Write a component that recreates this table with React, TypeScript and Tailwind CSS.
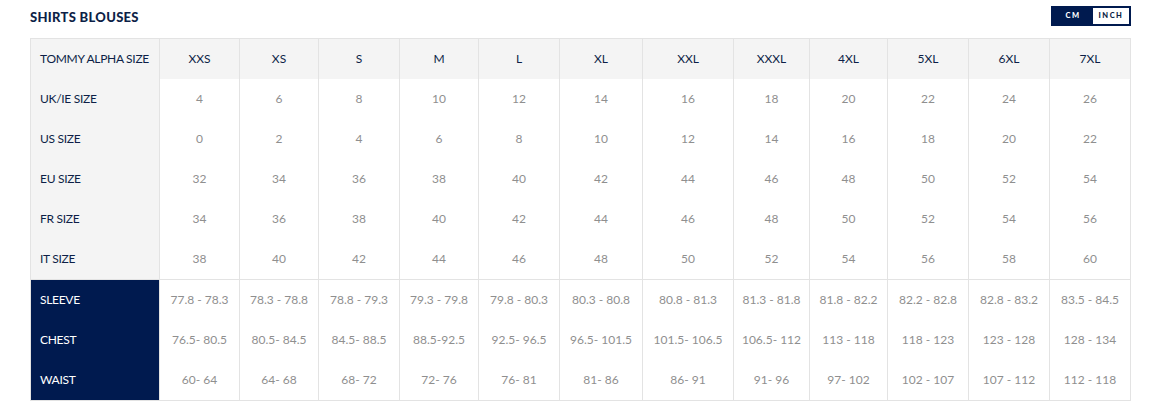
import React from "react";

const widths = [80, 79, 81, 79, 81, 83, 91, 76, 78, 81, 81, 81];

const sizeRows: [string, string[]][] = [
  ["UK/IE SIZE", ["4", "6", "8", "10", "12", "14", "16", "18", "20", "22", "24", "26"]],
  ["US SIZE", ["0", "2", "4", "6", "8", "10", "12", "14", "16", "18", "20", "22"]],
  ["EU SIZE", ["32", "34", "36", "38", "40", "42", "44", "46", "48", "50", "52", "54"]],
  ["FR SIZE", ["34", "36", "38", "40", "42", "44", "46", "48", "50", "52", "54", "56"]],
  ["IT SIZE", ["38", "40", "42", "44", "46", "48", "50", "52", "54", "56", "58", "60"]],
];

const measureRows: [string, string[]][] = [
  ["SLEEVE", ["77.8 - 78.3", "78.3 - 78.8", "78.8 - 79.3", "79.3 - 79.8", "79.8 - 80.3", "80.3 - 80.8", "80.8 - 81.3", "81.3 - 81.8", "81.8 - 82.2", "82.2 - 82.8", "82.8 - 83.2", "83.5 - 84.5"]],
  ["CHEST", ["76.5- 80.5", "80.5- 84.5", "84.5- 88.5", "88.5-92.5", "92.5- 96.5", "96.5- 101.5", "101.5- 106.5", "106.5- 112", "113 - 118", "118 - 123", "123 - 128", "128 - 134"]],
  ["WAIST", ["60- 64", "64- 68", "68- 72", "72- 76", "76- 81", "81- 86", "86- 91", "91- 96", "97- 102", "102 - 107", "107 - 112", "112 - 118"]],
];

const alpha = ["XXS", "XS", "S", "M", "L", "XL", "XXL", "XXXL", "4XL", "5XL", "6XL", "7XL"];

function Row({
  label,
  values,
  variant,
}: {
  label: string;
  values: string[];
  variant: "head" | "size" | "measure";
}) {
  return (
    <div className={`flex h-[40px] ${variant === "head" ? "bg-[#f4f4f4]" : "bg-white"}`}>
      <div
        className={`w-[128px] shrink-0 flex items-center pl-[9px] whitespace-nowrap tracking-[-0.3px] ${
          variant === "measure" ? "bg-[#001a4f] text-white" : "bg-[#f4f4f4] text-[#0d1f47]"
        }`}
      >
        {label}
      </div>
      {values.map((v, i) => (
        <div
          key={i}
          style={{ width: widths[i] }}
          className={`shrink-0 border-l border-[#e3e3e3] flex items-center justify-center whitespace-nowrap ${
            variant === "head" ? "text-[#0d1f47]" : "text-[#8f8f8f]"
          }`}
        >
          {v}
        </div>
      ))}
    </div>
  );
}

export default function App() {
  return (
    <div className="w-[1150px] h-[407px] bg-white font-['Lato','Liberation_Sans',sans-serif] text-[12px]">
      <div className="flex items-start justify-between pl-[30px] pr-[19px] pt-[6px] h-[32px]">
        <h1 className="mt-[4px] text-[13px] leading-[14px] font-black tracking-[0.3px] text-[#0d1f47]">
          SHIRTS BLOUSES
        </h1>
        <div className="flex h-[20px] w-[80px] border-2 border-[#001a4f] text-[7.5px] font-black tracking-[1.5px] leading-none">
          <div className="w-[40px] bg-[#001a4f] text-white flex items-center justify-center">CM</div>
          <div className="flex-1 bg-white text-[#0d1f47] flex items-center justify-center">INCH</div>
        </div>
      </div>
      <div className="ml-[30px] mt-[6px] w-[1101px] border border-[#e3e3e3]">
        <Row label="TOMMY ALPHA SIZE" values={alpha} variant="head" />
        {sizeRows.map(([l, v]) => (
          <Row key={l} label={l} values={v} variant="size" />
        ))}
        <div className="border-t border-[#e3e3e3]">
          {measureRows.map(([l, v]) => (
            <Row key={l} label={l} values={v} variant="measure" />
          ))}
        </div>
      </div>
    </div>
  );
}
